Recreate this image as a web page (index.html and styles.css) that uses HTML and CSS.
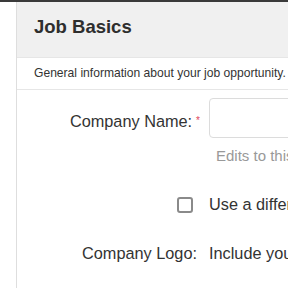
FILE: index.html
```html
<!DOCTYPE html>
<html lang="en">
<head>
  <meta charset="UTF-8">
  <title>Job Basics</title>
  <link rel="stylesheet" href="styles.css">
</head>
<body>
  <div class="topbar"></div>

  <div class="panel">
    <div class="panel-head">
      <h2>Job Basics</h2>
    </div>
    <div class="panel-desc">General information about your job opportunity.</div>

    <div class="form">
      <div class="row">
        <label class="label label-name" for="company">Company Name:<span class="req">*</span></label>
        <div class="field">
          <input type="text" id="company" class="text-input">
          <div class="help">Edits to this field will update your company profile.</div>
        </div>
      </div>

      <div class="row row-check">
        <div class="label"><span class="check"></span></div>
        <div class="field">Use a different company name for this job</div>
      </div>

      <div class="row row-logo">
        <div class="label">Company Logo:</div>
        <div class="field">Include your company logo with this job</div>
      </div>
    </div>
  </div>
</body>
</html>
```

FILE: styles.css
```css
body {
  margin: 0;
  font-family: "Liberation Sans", Arial, sans-serif;
  color: #333;
  background: #fff;
  overflow: hidden;
}
.topbar {
  height: 2px;
  background: #3a3a3a;
}
.panel {
  margin-left: 16px;
  width: 600px;
  border-left: 1px solid #dedede;
  min-height: 300px;
}
.panel-head {
  background: #f0f0f0;
  height: 55px;
  padding: 0 17px;
  display: flex;
  align-items: center;
  border-bottom: 1px solid #e6e6e6;
}
.panel-head h2 {
  margin: 0;
  font-size: 18.5px;
  font-weight: bold;
  color: #2e2e2e;
  position: relative;
  top: -3px;
}
.panel-desc {
  height: 31px;
  padding: 0 17px;
  font-size: 12.1px;
  line-height: 31px;
  color: #333;
  border-bottom: 1px solid #e6e6e6;
}
.form {
  padding-top: 8px;
}
.row {
  display: grid;
  grid-template-columns: 183px 1fr;
  column-gap: 9px;
  font-size: 16.3px;
  white-space: nowrap;
}
.label {
  text-align: right;
  padding-right: 3px;
  line-height: 40px;
}
.label-name {
  padding-top: 3px;
}
.req {
  color: #e0455a;
  font-size: 10px;
  margin-left: 4px;
  margin-right: -3px;
  vertical-align: 3px;
}
.text-input {
  display: block;
  box-sizing: border-box;
  width: 300px;
  height: 40px;
  border: 1px solid #dcdcdc;
  border-radius: 4px;
  margin: 0;
}
.help {
  margin-top: 9px;
  font-size: 15px;
  line-height: 18px;
  color: #999;
  padding-left: 7px;
}
.row-check {
  margin-top: 30px;
  align-items: center;
}
.row-check .label {
  line-height: 0;
  padding-right: 7px;
}
.check {
  display: inline-block;
  width: 16px;
  height: 16px;
  box-sizing: border-box;
  border: 2px solid #8a8a8a;
  border-radius: 3px;
}
.row-logo {
  margin-top: 19px;
  line-height: 40px;
}
```
